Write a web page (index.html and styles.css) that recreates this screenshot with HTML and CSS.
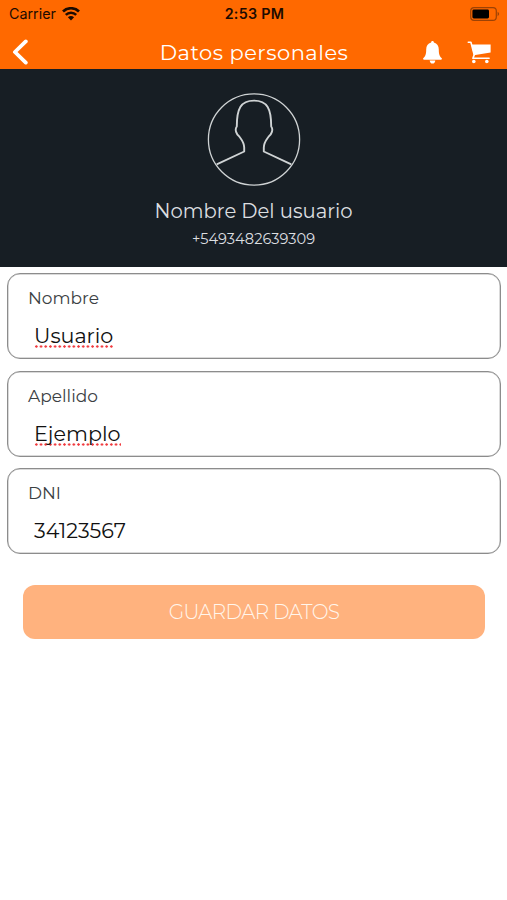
FILE: index.html
```html
<!DOCTYPE html>
<html lang="es">
<head>
    <meta charset="UTF-8">
    <meta name="viewport" content="width=device-width, initial-scale=1.0">
    <title>Datos personales</title>
    <link rel="stylesheet" href="styles.css">
</head>
<body>
    <header>
        <div class="status-bar">
            <div class="carrier">
                <span>Carrier</span>
                <svg class="wifi" width="18" height="14" viewBox="0 0 18 14" fill="none" stroke="#1c0b00">
                    <path d="M1 4.5a11.5 11.5 0 0 1 16 0" stroke-width="2.7"/>
                    <path d="M3.8 7.9a7.3 7.3 0 0 1 10.4 0" stroke-width="2.5"/>
                    <path d="M9 13.4L5.9 10.3a4.6 4.6 0 0 1 6.2 0z" fill="#1c0b00" stroke="none"/>
                </svg>
            </div>
            <span class="time">2:53 PM</span>
            <svg class="battery" width="30" height="14" viewBox="0 0 30 14">
                <rect x="0.7" y="0.7" width="25.6" height="12.6" rx="3.4" fill="none" stroke="#9c4205" stroke-width="1.2"/>
                <rect x="2.4" y="2.5" width="16.6" height="9" rx="1.4" fill="#000"/>
                <path d="M27.6 4.8q3 2.2 0 4.4z" fill="#9c4205"/>
            </svg>
        </div>
        <nav>
            <a href="#" class="back">
                <svg width="16" height="26" viewBox="0 0 16 26" fill="none" stroke="#fff" stroke-width="3.8" stroke-linecap="round" stroke-linejoin="round">
                    <path d="M13.8 2.4L2.9 13l10.9 10.6"/>
                </svg>
            </a>
            <h1>Datos personales</h1>
            <div class="actions">
                <a href="#">
                    <svg width="19" height="23" viewBox="0 0 19 23" fill="#fff">
                        <path d="M9.5 0c.9 0 1.4.6 1.4 1.5 3.2.8 4.9 3.3 4.9 6.9 0 4.8 1 7 2.8 8.7.6.7.2 1.6-.7 1.6H1.1c-.9 0-1.3-.9-.7-1.6 1.8-1.7 2.8-3.9 2.8-8.7 0-3.6 1.7-6.1 4.9-6.9C8.1.6 8.6 0 9.5 0z"/>
                        <path d="M6.7 19.4h5.6c-.2 2-1.2 3.2-2.8 3.2s-2.600-1.200-2.800-3.200z"/>
                    </svg>
                </a>
                <a href="#">
                    <svg width="25" height="23" viewBox="0 0 25 23" fill="none" stroke="#fff">
                        <path d="M1.300 1.300h2.600l3.300 12.600-1.300 3.400h16.200" stroke-width="1.600" stroke-linecap="round" stroke-linejoin="round"/>
                        <path d="M4.400 3.600h19.200v7.800L6.800 14.200z" fill="#fff" stroke="none"/>
                        <circle cx="6.800" cy="20.500" r="1.800" fill="#fff" stroke="none"/>
                        <circle cx="19.800" cy="20.500" r="1.800" fill="#fff" stroke="none"/>
                    </svg>
                </a>
            </div>
        </nav>
    </header>

    <section class="profile">
        <svg class="avatar" width="94" height="94" viewBox="0 0 94 94" fill="none" stroke="#cfd3d4">
            <circle cx="47" cy="47.500" r="45.600" stroke-width="1.300"/>
            <path d="M9.700 72.300L37.200 59.500V55.500C37.200 50.500 34.500 47.500 32.300 44.500C29.500 42.500 27.400 37.500 29.800 34.500C29.800 17 33.500 8.600 47 8.600S64.200 17 64.200 34.500C66.600 37.500 64.500 42.500 61.700 44.500C59.500 47.500 56.800 50.500 56.800 55.500V59.500L84.300 72.300" stroke-width="1.900" stroke-linejoin="round"/>
        </svg>
        <h2>Nombre Del usuario</h2>
        <p>+5493482639309</p>
    </section>

    <form onsubmit="event.preventDefault();">
        <div class="form-group">
            <span class="label">Nombre</span>
            <div class="value"><span class="misspelled">Usuario</span></div>
        </div>
        <div class="form-group">
            <span class="label">Apellido</span>
            <div class="value"><span class="misspelled">Ejemplo</span></div>
        </div>
        <div class="form-group">
            <span class="label">DNI</span>
            <div class="value">34123567</div>
        </div>
        <button type="submit">GUARDAR DATOS</button>
    </form>
</body>
</html>
```
FILE: styles.css
```css
* {
    box-sizing: border-box;
}
body {
    font-family: Montserrat, Inter, sans-serif;
    margin: 0;
    background: white;
    color: #111;
}
h1, h2, p {
    margin: 0;
    font-weight: 400;
}
header {
    background: #ff6900;
    height: 69px;
}
.status-bar {
    display: grid;
    grid-template-columns: 1fr auto 1fr;
    align-items: center;
    height: 27px;
    padding: 0 7px 0 9px;
    font-family: Inter, sans-serif;
    font-size: 14.3px;
    color: #1c0b00;
}
.carrier {
    display: flex;
    align-items: center;
    gap: 6px;
}
.time {
    font-weight: 600;
    letter-spacing: 0.3px;
}
.battery {
    justify-self: end;
}
nav {
    display: grid;
    grid-template-columns: 1fr auto 1fr;
    align-items: center;
    height: 42px;
    padding: 8px 15px 0 12px;
}
nav a {
    display: flex;
}
nav h1 {
    padding: 1px 0 0 4px;
    font-size: 21px;
    line-height: 27px;
    letter-spacing: 0.5px;
    color: white;
}
.actions {
    display: flex;
    align-items: center;
    justify-content: flex-end;
    gap: 25px;
}
.profile {
    display: flex;
    flex-direction: column;
    align-items: center;
    height: 198px;
    padding-top: 23px;
    background: #171e24;
    color: #dcdfe0;
}
.profile h2 {
    margin-top: 12px;
    font-size: 19.6px;
    line-height: 26px;
}
.profile p {
    margin-top: 5px;
    font-size: 14.6px;
    line-height: 20px;
}
form {
    padding: 6px 6px 0 7px;
}
.form-group {
    height: 86px;
    margin-bottom: 11.7px;
    padding: 13px 20px 0;
    border: 1px solid #8c8c8c;
    border-radius: 13px;
    box-shadow: inset 0 0 0 0.5px #b5b5b5;
}
.label {
    display: block;
    font-size: 17px;
    line-height: 22px;
    color: #3b4043;
}
.value {
    padding: 13px 0 0 6px;
    font-size: 20.7px;
    line-height: 28px;
}
.misspelled {
    display: inline-block;
    height: 26px;
    background: radial-gradient(circle, #f0383c 0.9px, transparent 1.5px) left bottom / 4.7px 3px repeat-x;
}
button {
    display: block;
    width: 462px;
    height: 54px;
    margin: 31px auto 0;
    padding-bottom: 2px;
    border: none;
    border-radius: 12px;
    background: #ffb27e;
    color: #fff6ec;
    font-family: inherit;
    font-size: 20px;
    font-weight: 300;
    letter-spacing: -0.65px;
}
```
